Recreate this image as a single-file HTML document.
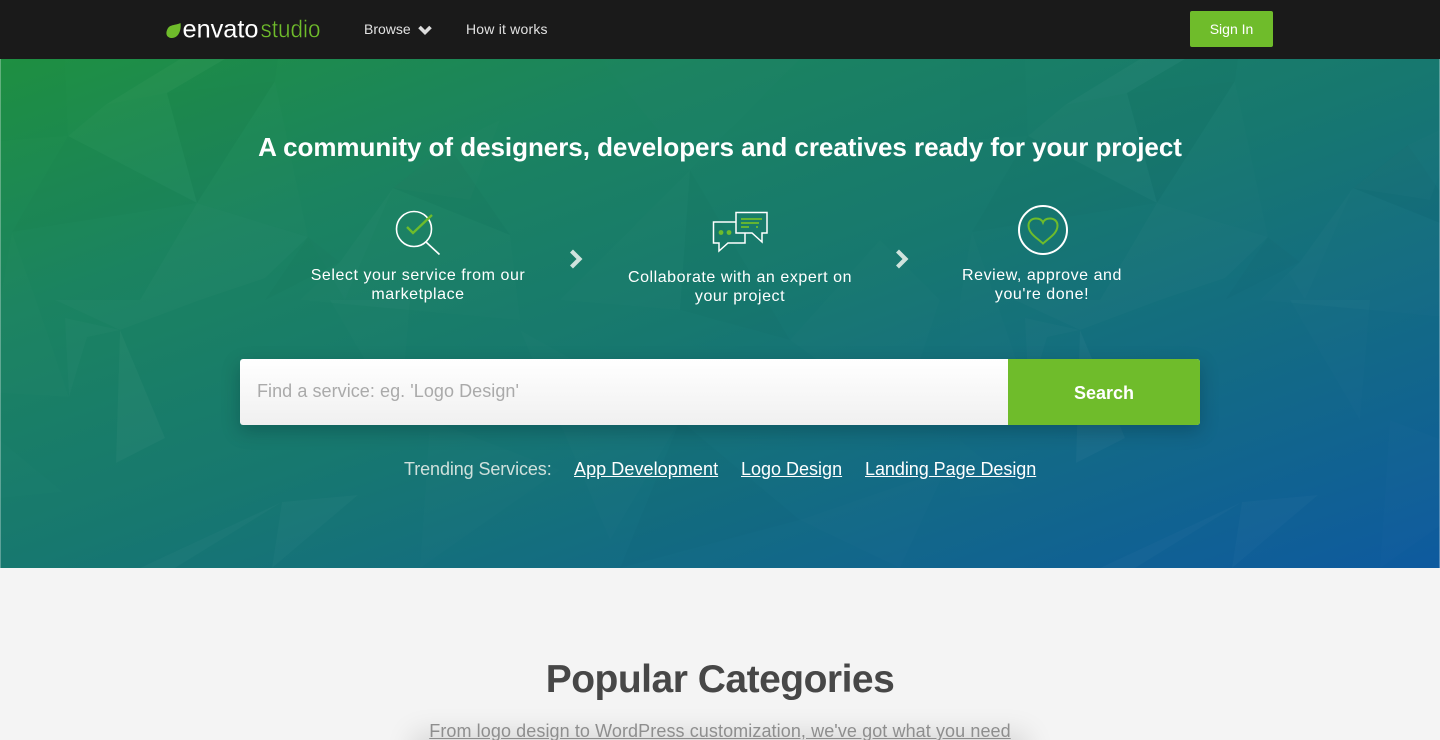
<!DOCTYPE html>
<html><head><meta charset="utf-8"><title>Envato Studio</title>
<style>
*{box-sizing:border-box}
html,body{margin:0;padding:0;width:1440px;height:740px;overflow:hidden;background:#f4f4f4;font-family:"Liberation Sans",Arial,sans-serif}
#wrap{position:relative;width:1440px;height:740px;overflow:hidden;background:#f4f4f4}
.t{position:absolute;white-space:nowrap}
#nav{position:absolute;left:0;top:0;width:1440px;height:59px;background:#1a1a1a}
#hero{position:absolute;left:0;top:59px;width:1440px;height:509px;background:linear-gradient(to bottom right,#1f9042 0%,#1b8360 25%,#17786f 50%,#0e5a9f 100%);overflow:hidden}
#hero svg.bg{position:absolute;left:0;top:-59px}
.edge{position:absolute;top:59px;width:1px;height:509px;background:rgba(255,255,255,.3)}
.step{color:#fff;font-size:16px;line-height:19px;letter-spacing:.55px;text-align:center;transform:translateX(-50%)}
</style></head>
<body>
<div id="wrap">
<div id="nav"></div>
<svg style="position:absolute;left:160px;top:15px" width="170" height="30" viewBox="160 15 170 30">
<path d="M180.500 23C176 25.500 170 24 167.500 29C165 34 167 38 172 38C178 38 181.500 31 180.500 23Z" fill="#6fbc2b"/>
<text x="182.500" y="37.300" font-family="Liberation Sans" font-size="25" fill="#fff" textLength="76" lengthAdjust="spacingAndGlyphs">envato</text>
<text x="260.500" y="37.300" font-family="Liberation Sans" font-size="25" fill="#6fbc2b" stroke="#1a1a1a" stroke-width=".45" textLength="60" lengthAdjust="spacingAndGlyphs">studio</text>
</svg>
<div class="t" style="left:364px;top:21px;font-size:14px;line-height:17px;color:#e2e2e2">Browse</div>
<svg style="position:absolute;left:418px;top:24px" width="14" height="12" viewBox="0 0 14 12"><path d="M1.500 3L7 8.500L12.500 3" fill="none" stroke="#dcdcdc" stroke-width="3.600"/></svg>
<div class="t" style="left:466px;top:21px;font-size:14px;line-height:17px;letter-spacing:.2px;color:#e2e2e2">How it works</div>
<div class="t" style="left:1190px;top:11px;width:83px;height:36px;background:#6fbc2b;border-radius:2px;color:#fff;font-size:14px;line-height:36px;text-align:center">Sign In</div>

<div id="hero">
<svg class="bg" width="1440" height="568" viewBox="0 0 1440 568">
<defs><g id="tile">
<polygon points="0,59 65,59 68,136 0,141" fill="#000" opacity=".012"/>
<polygon points="0,141 68,136 12,232 0,258" fill="#fff" opacity=".012"/>
<polygon points="68,136 105,105 180,59 225,59 167,93 197,203" fill="#fff" opacity=".03"/>
<polygon points="105,105 180,59 225,59 167,93" fill="#fff" opacity=".02"/>
<polygon points="167,93 275,81 197,203" fill="#000" opacity=".03"/>
<polygon points="225,59 278,59 275,81 167,93" fill="#000" opacity=".025"/>
<polygon points="275,81 308,237 197,203" fill="#fff" opacity=".02"/>
<polygon points="68,136 197,203 12,232" fill="#000" opacity=".018"/>
<polygon points="197,203 308,237 265,278 200,300 140,300" fill="#fff" opacity=".035"/>
<polygon points="12,232 36,300 69,397 0,393 0,300" fill="#fff" opacity=".02"/>
<polygon points="65,318 120,330 87,337 69,397" fill="#fff" opacity=".035"/>
<polygon points="55,300 140,300 200,300 120,330" fill="#fff" opacity=".03"/>
<polygon points="120,330 165,438 116,463" fill="#fff" opacity=".05"/>
<polygon points="120,330 282,502 165,438" fill="#fff" opacity=".012"/>
<polygon points="0,440 63,492 0,498" fill="#fff" opacity=".015"/>
<polygon points="282,502 140,568 175,568" fill="#fff" opacity=".04"/>
<polygon points="282,502 358,495 272,568" fill="#fff" opacity=".04"/>
<polygon points="308,237 345,300 393,188 275,81" fill="#fff" opacity=".012"/>
<polygon points="393,188 448,145 500,120 470,200" fill="#fff" opacity=".025"/>
<polygon points="448,145 510,235 393,188" fill="#000" opacity=".03"/>
<polygon points="393,188 510,235 520,320 300,300 340,262" fill="#fff" opacity=".022"/>
<polygon points="308,237 340,262 265,300" fill="#000" opacity=".025"/>
<polygon points="330,300 410,300 400,420" fill="#fff" opacity=".025"/>
<polygon points="600,59 800,59 690,170" fill="#fff" opacity=".015"/>
<polygon points="690,170 560,300 680,310" fill="#fff" opacity=".018"/>
<polygon points="690,170 790,340 680,310" fill="#000" opacity=".018"/>
<polygon points="790,340 880,240 940,300 900,420" fill="#fff" opacity=".018"/>
<polygon points="520,330 680,420 610,540" fill="#fff" opacity=".018"/>
<polygon points="680,420 800,520 620,568" fill="#000" opacity=".018"/>
<polygon points="800,520 945,470 900,568" fill="#fff" opacity=".022"/>
<polygon points="430,420 560,470 420,568" fill="#fff" opacity=".018"/>
</g></defs>
<use href="#tile" opacity=".65"/><use href="#tile" x="960" opacity=".65"/>
</svg>

<div class="t" style="left:0;width:1440px;top:71px;text-align:center;color:#fff;font-size:26px;line-height:34px;font-weight:bold;letter-spacing:-.04px">A community of designers, developers and creatives ready for your project</div>

<svg style="position:absolute;left:390px;top:146px" width="56" height="54" viewBox="390 205 56 54">
<circle cx="414" cy="229" r="17.500" fill="none" stroke="#fff" stroke-width="1.600"/>
<path d="M426 242L439.500 254.500" stroke="#fff" stroke-width="1.600" fill="none"/>
<path d="M407 227L413 233L432 215" stroke="#6fbc2b" stroke-width="2.400" fill="none"/>
</svg>
<svg style="position:absolute;left:708px;top:148px" width="64" height="56" viewBox="708 207 64 56">
<path d="M736 222H713.500V243H719V251L728 243H745V233" fill="none" stroke="#fff" stroke-width="1.500"/>
<path d="M736 212.500H767V233H762V242L752 233H736Z" fill="none" stroke="#fff" stroke-width="1.500"/>
<path d="M741 219H762M741 223H759M741 227H749M756 227H758" stroke="#6fbc2b" stroke-width="1.800" fill="none"/>
<circle cx="721" cy="232.500" r="2.400" fill="#6fbc2b"/><circle cx="729" cy="232.500" r="2.400" fill="#6fbc2b"/>
</svg>
<svg style="position:absolute;left:1015px;top:143px" width="56" height="56" viewBox="1015 202 56 56">
<circle cx="1043" cy="230" r="24" fill="none" stroke="#fff" stroke-width="2"/>
<path d="M1043 243.500C1037 238 1028.500 233.500 1028.500 225.500C1028.500 221 1032 218.500 1036 218.500C1039.500 218.500 1042 220 1043 222.500C1044 220 1046.500 218.500 1050 218.500C1054 218.500 1057.500 221 1057.500 225.500C1057.500 233.500 1049 238 1043 243.500Z" fill="none" stroke="#6fbc2b" stroke-width="2"/>
</svg>
<svg style="position:absolute;left:568px;top:189px" width="18" height="22" viewBox="0 0 18 22"><path d="M3.500 3L11.500 11L3.500 19" fill="none" stroke="#cfe3dd" stroke-width="4.200"/></svg>
<svg style="position:absolute;left:894px;top:189px" width="18" height="22" viewBox="0 0 18 22"><path d="M3.500 3L11.500 11L3.500 19" fill="none" stroke="#cfe3dd" stroke-width="4.200"/></svg>

<div class="t step" style="left:418px;top:207px">Select your service from our<br>marketplace</div>
<div class="t step" style="left:740px;top:209px">Collaborate with an expert on<br>your project</div>
<div class="t step" style="left:1042px;top:207px">Review, approve and<br>you're done!</div>

<div class="t" style="left:240px;top:300px;width:960px;height:66px;border-radius:3px;box-shadow:0 6px 18px rgba(0,30,40,.28);overflow:hidden;background:linear-gradient(#fff,#f0f0f0)">
<div class="t" style="left:17px;top:0;line-height:65px;font-size:18px;letter-spacing:.06px;color:#aaa">Find a service: eg. 'Logo Design'</div>
<div class="t" style="left:768px;top:0;width:192px;height:66px;background:#6fbc2b;color:#fff;font-weight:bold;font-size:18px;line-height:68px;text-align:center">Search</div>
</div>

<div class="t" style="left:404px;top:399px;font-size:18px;line-height:22px;letter-spacing:-.1px;color:#cfe0dc">Trending Services:</div>
<div class="t" style="left:574px;top:399px;font-size:18px;line-height:22px;letter-spacing:.07px;color:#fff;text-decoration:underline">App Development</div>
<div class="t" style="left:741px;top:399px;font-size:18px;line-height:22px;color:#fff;text-decoration:underline">Logo Design</div>
<div class="t" style="left:865px;top:399px;font-size:18px;line-height:22px;letter-spacing:-.05px;color:#fff;text-decoration:underline">Landing Page Design</div>
</div>
<div class="edge" style="left:0"></div><div class="edge" style="left:1439px"></div>

<div class="t" style="left:425px;top:746px;width:590px;height:20px;box-shadow:0 0 28px 12px rgba(0,0,0,.13)"></div>
<div class="t" style="left:0;width:1440px;top:658px;text-align:center;font-size:39px;line-height:44px;font-weight:bold;letter-spacing:-.5px;color:#474747">Popular Categories</div>
<div class="t" style="left:0;width:1440px;top:720px;text-align:center;font-size:18px;line-height:22px;letter-spacing:.09px;color:#8e8e8e;text-decoration:underline">From logo design to WordPress customization, we've got what you need</div>
</div>
</body></html>
